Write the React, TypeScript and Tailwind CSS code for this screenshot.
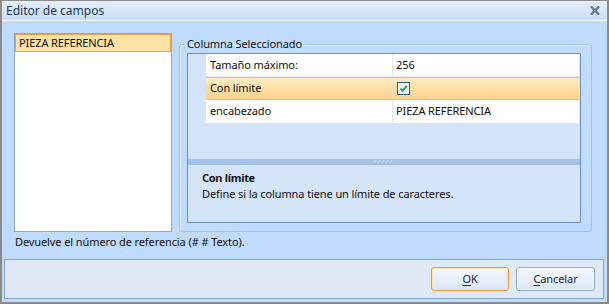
import React from "react";

const font = "font-['Noto_Sans',sans-serif]";

function CheckBox() {
  return (
    <svg width="13" height="13" viewBox="0 0 13 13">
      <rect x="0.5" y="0.5" width="12" height="12" fill="#f4f7fb" stroke="#2e5a86" />
      <rect x="2" y="2" width="9" height="9" fill="#e4ecf5" />
      <path d="M3.5 6.5 L5.5 8.8 L9.8 3.8" fill="none" stroke="#2f9a3a" strokeWidth="1.8" />
    </svg>
  );
}

function Grip() {
  return (
    <svg width="22" height="3" viewBox="0 0 22 3">
      {[0, 4, 8, 12, 16].map((x) => (
        <path key={x} d={`M${x + 1} 2.5 L${x + 3} 0.5`} stroke="#e8f0fb" strokeWidth="1" />
      ))}
    </svg>
  );
}

function Button({ label, first, active }: { label: string; first: number; active?: boolean }) {
  return (
    <button
      className={
        active
          ? "flex h-[24px] w-[78px] items-center justify-center rounded-[3px] border border-[#f09a34] bg-gradient-to-b from-[#f2f7fe] via-[#e8f0fb] to-[#d9e5f5] text-[11px] tracking-[-0.1px] text-[#172a45] shadow-[inset_0_0_0_1px_#fbe1b8]"
          : "flex h-[24px] w-[79px] items-center justify-center rounded-[3px] border border-[#8fa8cb] bg-gradient-to-b from-[#f2f7fe] via-[#e8f0fb] to-[#d9e5f5] text-[11px] tracking-[-0.1px] text-[#172a45] shadow-[inset_0_0_0_1px_#f7fafe]"
      }
    >
      <span className="underline underline-offset-2">{label.slice(0, first)}</span>
      <span>{label.slice(first)}</span>
    </button>
  );
}

export default function App() {
  return (
    <div
      className={`${font} flex h-[304px] w-[609px] flex-col border-x-2 border-b-2 border-t border-[#8b8b8b] bg-[#bfdbff] text-[11px] tracking-[-0.1px] text-[#111]`}
    >
      {/* Title bar */}
      <div className="flex h-[20px] shrink-0 items-center justify-between border-b border-white bg-gradient-to-b from-[#e6effb] to-[#c9dcf6] pl-[4px] pr-[7px]">
        <span className="text-[12px] leading-[16px] tracking-normal text-[#22395a]">Editor de campos</span>
        <svg width="10" height="9" viewBox="0 0 10 9">
          <path d="M1 0.5 L9 8.5 M9 0.5 L1 8.5" stroke="#4d5f78" strokeWidth="2.2" />
          <path d="M1 0.5 L9 8.5 M9 0.5 L1 8.5" stroke="#9aa9bd" strokeWidth="0.8" />
        </svg>
      </div>

      {/* Body */}
      <div className="flex flex-1 flex-col px-[12px] pt-[12px]">
        <div className="flex h-[199px]">
          {/* Column list */}
          <div className="w-[158px] border border-[#8ea6c8] bg-white">
            <div className="flex h-[18px] items-center border border-[#ee9d4c] bg-[#ffe3a4] pl-[3px] leading-[16px]">
              PIEZA REFERENCIA
            </div>
          </div>

          {/* Group box */}
          <fieldset className="ml-[7px] mt-[3px] w-[413px] rounded-[3px] border border-[#a5bfe3] px-[7px] pb-[9px] shadow-[inset_1px_1px_0_#e6f0fd]">
            <legend className="ml-[-3px] px-[3px] leading-[16px] text-[#111]">Columna Seleccionado</legend>
            <div className="mt-[1px] flex h-[170px] w-[394px] flex-col border border-[#6f90c2] bg-[#d4e4f8]">
              <div className="h-[105px] pl-[18px] pr-[1px]">
                <div className="flex h-[23px] items-center border-b border-[#e4e9f0] bg-white">
                  <div className="flex h-full w-[187px] items-center border-r border-[#e1e6ee] pl-[4px]">
                    Tamaño máximo:
                  </div>
                  <div className="pl-[3px]">256</div>
                </div>
                <div className="flex h-[23px] items-center border-y border-[#f2bd6c] bg-gradient-to-b from-[#feebc0] to-[#fbd38c]">
                  <div className="flex h-full w-[187px] items-center border-r border-[#fbe4b7] pl-[4px]">
                    Con límite
                  </div>
                  <div className="flex items-center pl-[4px]">
                    <CheckBox />
                  </div>
                </div>
                <div className="flex h-[23px] items-center bg-white">
                  <div className="flex h-full w-[187px] items-center border-r border-[#e1e6ee] pl-[4px]">
                    encabezado
                  </div>
                  <div className="pl-[3px]">PIEZA REFERENCIA</div>
                </div>
              </div>
              <div className="flex h-[5px] items-center justify-center bg-[#a6c2e8]">
                <Grip />
              </div>
              <div className="flex h-[58px] flex-col border-t border-[#9ebbe2] bg-[#d5e5f9] pl-[14px] pt-[5px]">
                <span className="font-bold leading-[16px] tracking-[-0.3px]">Con límite</span>
                <span className="leading-[16px]">Define si la columna tiene un límite de caracteres.</span>
              </div>
            </div>
          </fieldset>
        </div>

        <div className="mt-[2px] pl-[1px] leading-[16px]">Devuelve el número de referencia (# # Texto).</div>
      </div>

      {/* Button panel */}
      <div className="mb-[3px] ml-[2px] mr-[3px] flex h-[40px] items-start justify-end gap-[7px] border border-[#8aa3c7] bg-[#dfe8f5] pr-[8px] pt-[7px]">
        <Button label="OK" first={1} active />
        <Button label="Cancelar" first={1} />
      </div>
    </div>
  );
}
